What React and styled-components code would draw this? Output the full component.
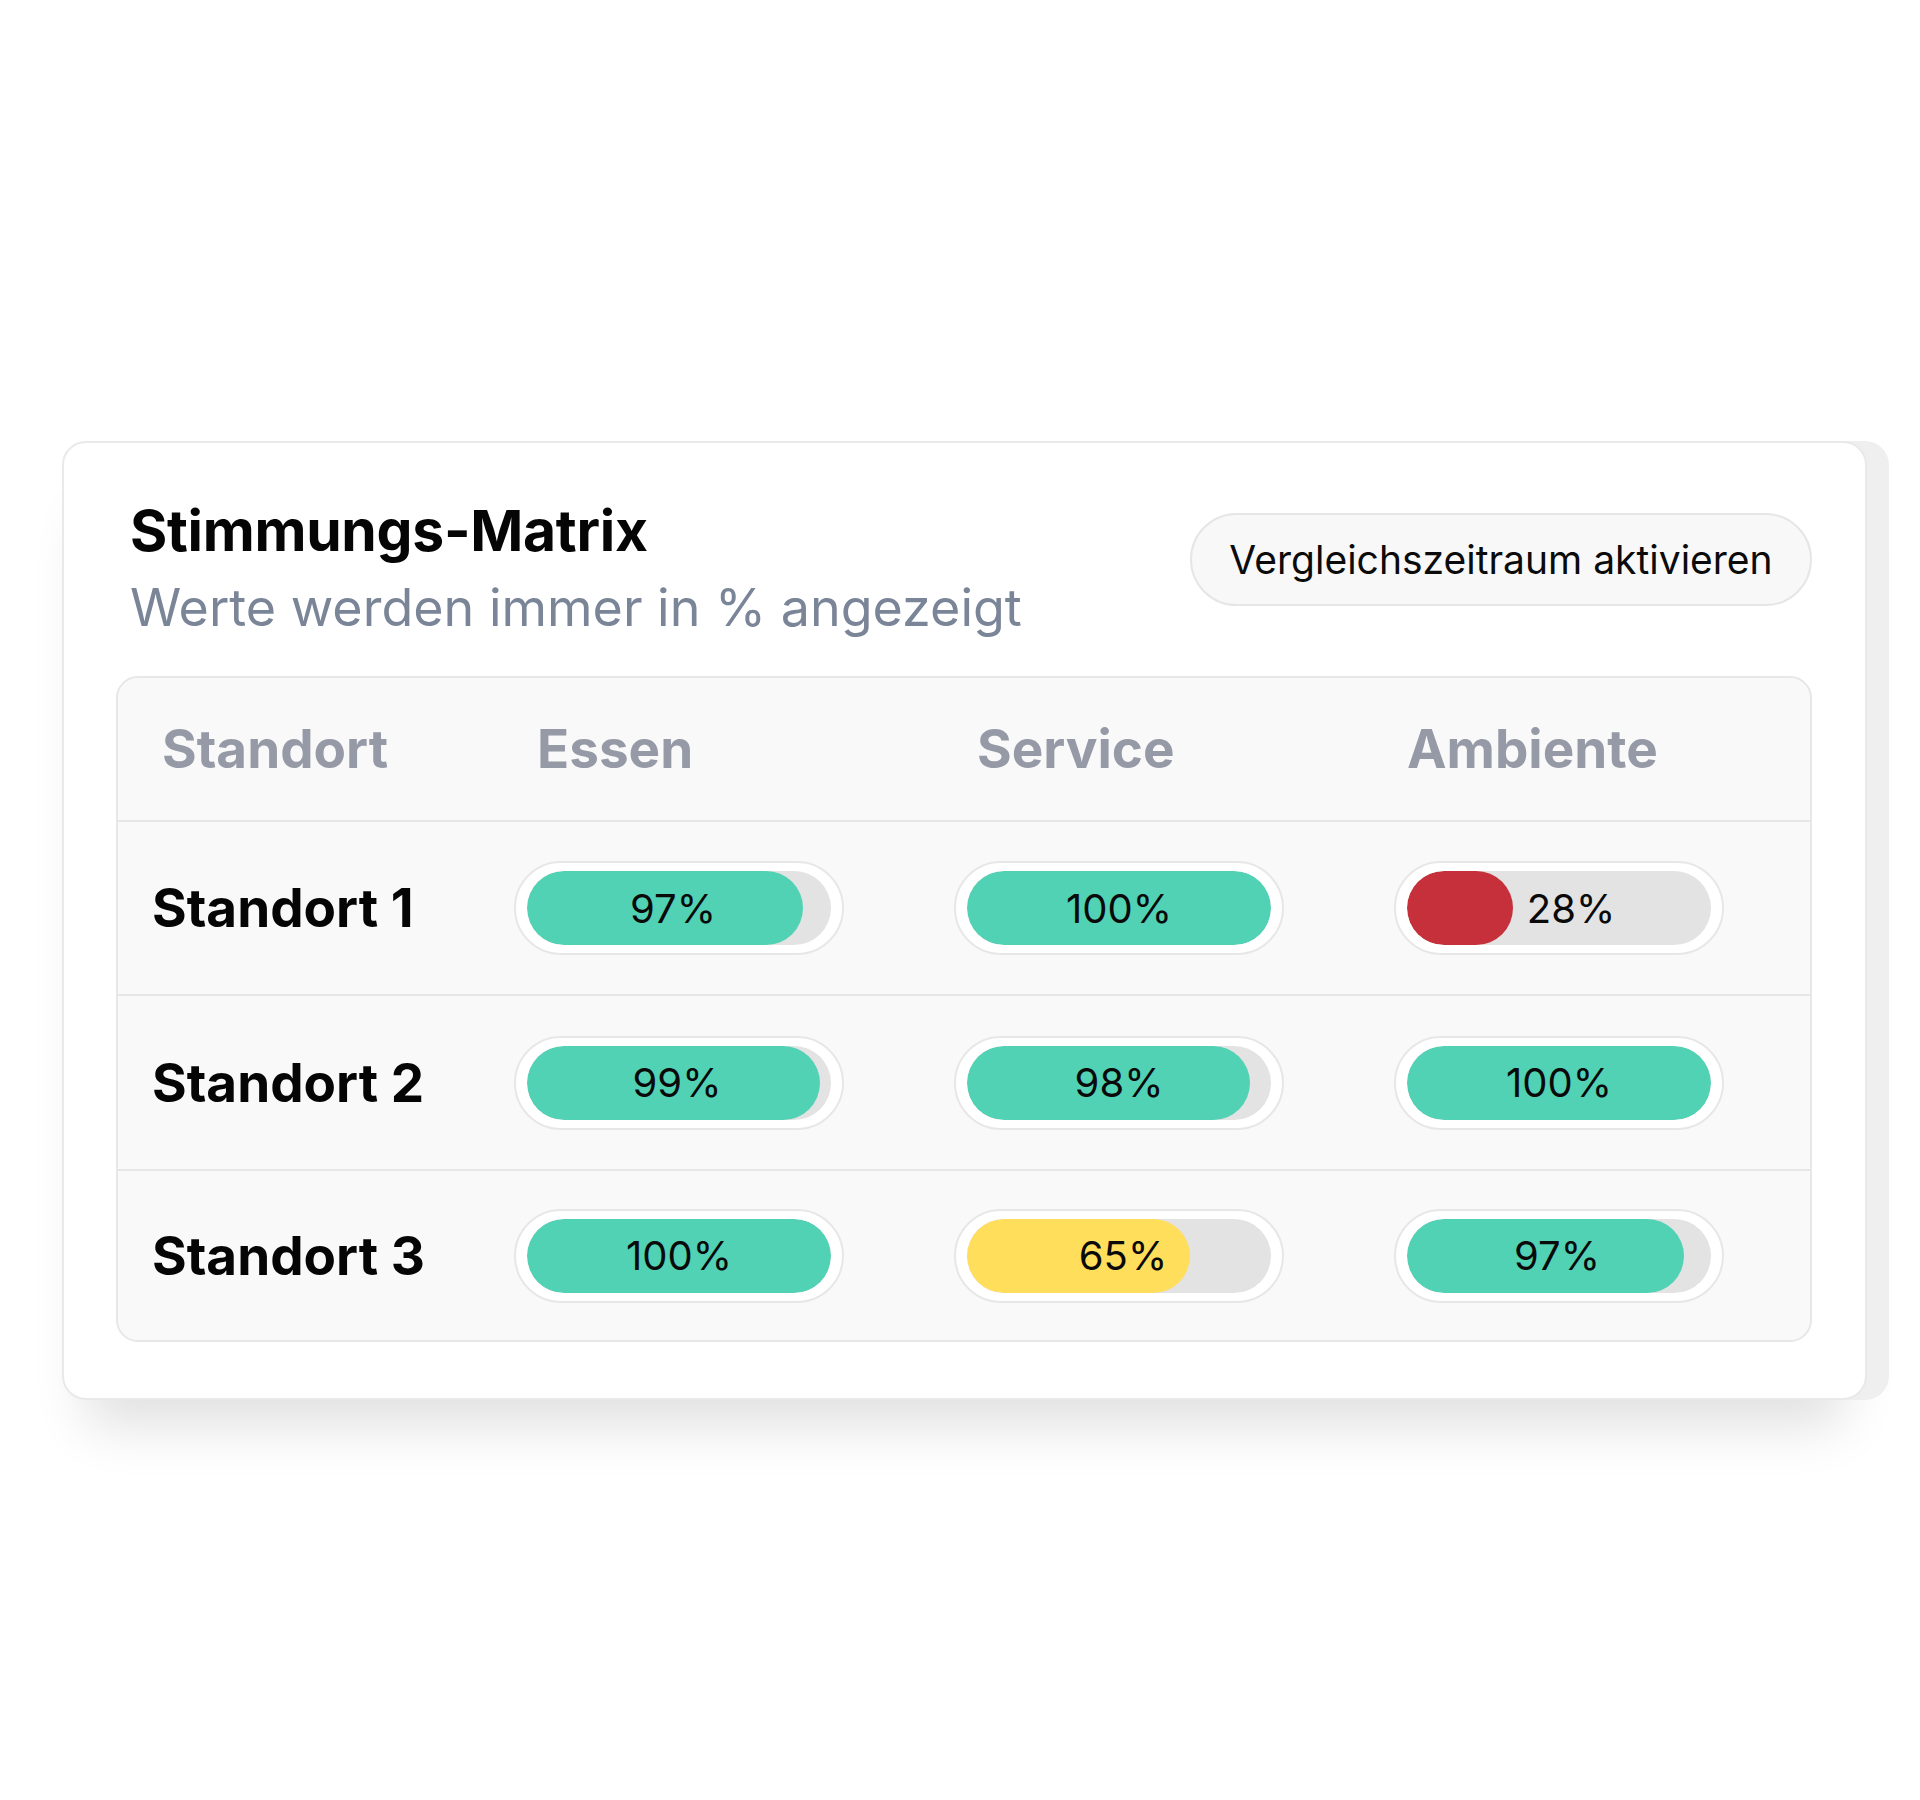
import React from "react";
import styled, { createGlobalStyle } from "styled-components";

const Global = createGlobalStyle`
  html, body { margin: 0; padding: 0; background: #ffffff; }
  body { font-family: Inter, "Noto Sans", "Liberation Sans", sans-serif; color: #0b0b0b; }
  * { box-sizing: border-box; }
`;

const Page = styled.div`
  width: 1920px;
  height: 1800px;
  padding: 441px 0 0 62px;
`;

const Card = styled.section`
  width: 1805px;
  background: #ffffff;
  border: 2px solid #e9e9e9;
  border-radius: 24px;
  padding: 53px 53px 56px 52px;
  box-shadow: 22px 0 0 0 #efefef, 0 50px 50px -24px rgba(0, 0, 0, 0.12);
`;

const Header = styled.header`
  display: flex;
  justify-content: space-between;
  align-items: flex-start;
  padding-left: 14px;
`;

const TitleBlock = styled.div`
  display: flex;
  flex-direction: column;
  gap: 11px;
`;

const Title = styled.h1`
  margin: 0;
  font-size: 57px;
  line-height: 70px;
  font-weight: 700;
  color: #050505;
  letter-spacing: -0.3px;
`;

const Subtitle = styled.p`
  margin: 0;
  font-size: 52px;
  line-height: 62px;
  font-weight: 400;
  color: #7b8598;
`;

const CompareButton = styled.button`
  margin-top: 17px;
  height: 93px;
  width: 622px;
  padding: 0;
  border-radius: 47px;
  border: 2px solid #e6e6e6;
  background: #f8f8f8;
  font-family: inherit;
  font-size: 39px;
  color: #0b0b0b;
  cursor: pointer;
`;

const Table = styled.div`
  margin-top: 37px;
  background: #f9f9f9;
  border: 2px solid #e7e7e7;
  border-radius: 22px;
  overflow: hidden;
`;

const Row = styled.div`
  display: grid;
  grid-template-columns: 362px 440px 440px 1fr;
  align-items: center;
  padding-left: 34px;
  height: ${(p) => p.$h}px;
  border-top: ${(p) => (p.$first ? "none" : "2px solid #e6e6e6")};
`;

const HeadCell = styled.div`
  font-size: 53px;
  font-weight: 700;
  color: #959aa6;
  padding-left: ${(p) => p.$indent}px;
`;

const RowLabel = styled.div`
  font-size: 53px;
  font-weight: 700;
  color: #050505;
`;

const PillFrame = styled.div`
  width: 330px;
  height: 94px;
  padding: 8px 11px;
  border: 2px solid #e7e7e7;
  border-radius: 47px;
  background: #ffffff;
`;

const Track = styled.div`
  position: relative;
  height: 74px;
  border-radius: 37px;
  background: #e3e3e3;
  overflow: hidden;
`;

const Fill = styled.div`
  height: 100%;
  border-radius: 37px;
  background: ${(p) => p.$color};
`;

const PercentLabel = styled.span`
  position: absolute;
  inset: 0;
  display: flex;
  align-items: center;
  justify-content: center;
  font-size: 40px;
  font-weight: 400;
  color: #0a0a0a;
  transform: translateX(${(p) => p.$shift}px);
`;

const COLORS = {
  good: "#51d2b4",
  mid: "#ffde5b",
  bad: "#c6303a",
};

const columns = [
  { name: "Standort", indent: 10 },
  { name: "Essen", indent: 23 },
  { name: "Service", indent: 23 },
  { name: "Ambiente", indent: 13 },
];

const rows = [
  {
    name: "Standort 1",
    h: 174,
    cells: [
      { value: 97, fill: 0.907, tone: "good", shift: -6 },
      { value: 100, fill: 1, tone: "good", shift: 0 },
      { value: 28, fill: 0.35, tone: "bad", shift: 12 },
    ],
  },
  {
    name: "Standort 2",
    h: 175,
    cells: [
      { value: 99, fill: 0.963, tone: "good", shift: -2 },
      { value: 98, fill: 0.93, tone: "good", shift: 0 },
      { value: 100, fill: 1, tone: "good", shift: 0 },
    ],
  },
  {
    name: "Standort 3",
    h: 171,
    cells: [
      { value: 100, fill: 1, tone: "good", shift: 0 },
      { value: 65, fill: 0.733, tone: "mid", shift: 4 },
      { value: 97, fill: 0.91, tone: "good", shift: -2 },
    ],
  },
];

function Meter({ value, fill, tone, shift }) {
  return (
    <PillFrame>
      <Track>
        <Fill $color={COLORS[tone]} style={{ width: `${fill * 100}%` }} />
        <PercentLabel $shift={shift}>{value}%</PercentLabel>
      </Track>
    </PillFrame>
  );
}

export default function App() {
  return (
    <>
      <Global />
      <Page>
        <Card>
          <Header>
            <TitleBlock>
              <Title>Stimmungs-Matrix</Title>
              <Subtitle>Werte werden immer in % angezeigt</Subtitle>
            </TitleBlock>
            <CompareButton>Vergleichszeitraum aktivieren</CompareButton>
          </Header>
          <Table>
            <Row $first $h={142}>
              {columns.map((c) => (
                <HeadCell key={c.name} $indent={c.indent}>
                  {c.name}
                </HeadCell>
              ))}
            </Row>
            {rows.map((r) => (
              <Row key={r.name} $h={r.h}>
                <RowLabel>{r.name}</RowLabel>
                {r.cells.map((c, i) => (
                  <Meter key={i} {...c} />
                ))}
              </Row>
            ))}
          </Table>
        </Card>
      </Page>
    </>
  );
}
